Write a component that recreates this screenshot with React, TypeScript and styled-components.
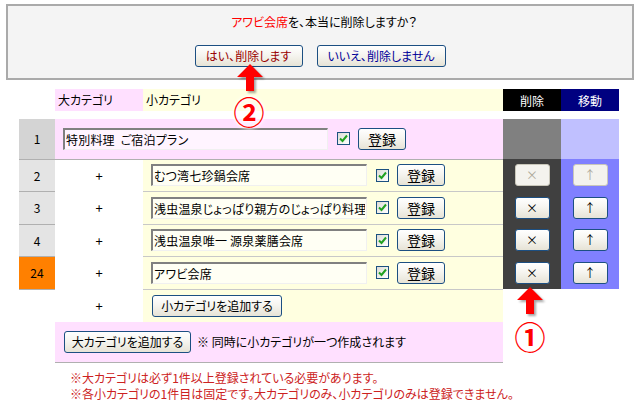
import styled, { createGlobalStyle } from 'styled-components';

const GlobalStyle = createGlobalStyle`
  body {
    margin: 0;
    background: #ffffff;
    color: #000000;
    font-family: "Noto Sans CJK JP", "Noto Sans", sans-serif;
    font-size: 12px;
    font-feature-settings: "palt";
  }
`;

type SubItem = { no: number; name: string; current?: boolean; locked?: boolean };

const subItems: SubItem[] = [
  { no: 2, name: 'むつ湾七珍鍋会席', locked: true },
  { no: 3, name: '浅虫温泉じょっぱり親方のじょっぱり料理' },
  { no: 4, name: '浅虫温泉唯一 源泉薬膳会席' },
  { no: 24, name: 'アワビ会席', current: true },
];

const CheckBox = () => (
  <CheckFrame>
    <svg width="9" height="9" viewBox="0 0 9 9">
      <path d="M1 4.5 L3.5 7 L8 1.5" fill="none" stroke="#21a121" strokeWidth="2" />
    </svg>
  </CheckFrame>
);

const UpArrow = ({ left, top }: { left: number; top: number }) => (
  <ArrowWrap style={{ left, top }}>
    <svg width="28" height="30" viewBox="0 0 28 30">
      <path d="M14 1 L27 14 L18 14 L18 28 L10 28 L10 14 L1 14 Z" fill="#ff0000" />
    </svg>
  </ArrowWrap>
);

const App = () => {
  return (
    <Page>
      <GlobalStyle />
      <ConfirmBox>
        <Question>
          <Em>アワビ会席</Em>を、本当に削除しますか？
        </Question>
        <ButtonRow>
          <XpButton tone="yes" width={108}>はい、削除します</XpButton>
          <XpButton tone="no" width={129}>いいえ、削除しません</XpButton>
        </ButtonRow>
      </ConfirmBox>

      <Table>
        <colgroup>
          <col style={{ width: 36 }} />
          <col style={{ width: 88 }} />
          <col style={{ width: 360 }} />
          <col style={{ width: 58 }} />
          <col style={{ width: 58 }} />
        </colgroup>
        <tbody>
          <HeadRow>
            <td />
            <HeadCell bg="#ffe0ff">大カテゴリ</HeadCell>
            <HeadCell bg="#ffffe0">小カテゴリ</HeadCell>
            <HeadDark bg="#000000">削除</HeadDark>
            <HeadDark bg="#000080">移動</HeadDark>
          </HeadRow>
          <SpacerRow>
            <td colSpan={5} />
          </SpacerRow>
          <MainRow>
            <NumCell bg="#d4d4d4">1</NumCell>
            <PinkCell colSpan={2}>
              <FieldLine>
                <TextInput width={265} bg="#fff4ff" defaultValue="特別料理  ご宿泊プラン" />
                <CheckBox />
                <XpButton width={48} big>登録</XpButton>
              </FieldLine>
            </PinkCell>
            <ToolCell bg="#808080" />
            <ToolCell bg="#c0c0ff" />
          </MainRow>
          {subItems.map((item) => (
            <SubRow key={item.no}>
              <NumCell bg={item.current ? '#ff8000' : '#e4e4e4'}>{item.no}</NumCell>
              <PlusCell>+</PlusCell>
              <SubCell>
                <FieldLine>
                  <TextInput width={216} bg="#fffff4" defaultValue={item.name} />
                  <CheckBox />
                  <XpButton width={48} big>登録</XpButton>
                </FieldLine>
              </SubCell>
              <ToolCell bg="#404040">
                <XpButton width={35} disabled={item.locked}>×</XpButton>
              </ToolCell>
              <ToolCell bg="#8080ff">
                <XpButton width={35} disabled={item.locked}>↑</XpButton>
              </ToolCell>
            </SubRow>
          ))}
          <AddRow>
            <td />
            <PlusCell>+</PlusCell>
            <AddCell>
              <XpButton width={130}>小カテゴリを追加する</XpButton>
            </AddCell>
            <td />
            <td />
          </AddRow>
          <FootRow>
            <td />
            <FootCell colSpan={2}>
              <FieldLine>
                <XpButton width={127}>大カテゴリを追加する</XpButton>
                <FootNote>※ 同時に小カテゴリが一つ作成されます</FootNote>
              </FieldLine>
            </FootCell>
            <td />
            <td />
          </FootRow>
        </tbody>
      </Table>

      <Notes>
        <div>※大カテゴリは必ず1件以上登録されている必要があります。</div>
        <div>※各小カテゴリの1件目は固定です。大カテゴリのみ、小カテゴリのみは登録できません。</div>
      </Notes>

      <UpArrow left={236} top={63} />
      <Marker style={{ left: 249, top: 110 }}>②</Marker>
      <UpArrow left={516} top={286} />
      <Marker style={{ left: 530, top: 335 }}>①</Marker>
    </Page>
  );
};

const Page = styled.div`
  position: relative;
  width: 639px;
  height: 406px;
  padding-top: 4px;
  box-sizing: border-box;
  overflow: hidden;
`;

const ConfirmBox = styled.div`
  margin: 0 5px 0 6px;
  height: 76px;
  box-sizing: border-box;
  border: 2px solid #aaaaaa;
  background: #f4f4f4;
  display: flex;
  flex-direction: column;
  align-items: center;
  padding-top: 8px;
  gap: 15px;
`;

const Question = styled.div`
  font-size: 12px;
  line-height: 16px;
  padding-left: 8px;
`;

const Em = styled.span`
  color: #ff0000;
`;

const ButtonRow = styled.div`
  display: flex;
  gap: 14px;
`;

const XpButton = styled.button<{ width?: number; tone?: 'yes' | 'no'; big?: boolean }>`
  width: ${({ width }) => (width ? `${width}px` : 'auto')};
  height: 22px;
  padding: 0;
  box-sizing: border-box;
  border: 1px solid #1c4f82;
  border-radius: 3px;
  background: linear-gradient(#ffffff 0%, #f6f5f0 45%, #e6e3d6 100%);
  font-family: "Noto Sans CJK JP", "Noto Sans", sans-serif;
  font-feature-settings: "palt";
  font-size: ${({ big }) => (big ? '14px' : '12px')};
  line-height: 20px;
  color: ${({ tone }) => (tone === 'yes' ? '#990000' : tone === 'no' ? '#000099' : '#000000')};
  flex-shrink: 0;

  &:disabled {
    border-color: #c9c7ba;
    background: #f4f3ee;
    color: #aca899;
  }
`;

const Table = styled.table`
  margin: 9px 0 0 19px;
  border-collapse: collapse;
  border-spacing: 0;
  table-layout: fixed;
  width: 600px;

  td {
    padding: 0;
  }
`;

const HeadRow = styled.tr`
  height: 22px;
`;

const HeadCell = styled.td<{ bg: string }>`
  background: ${({ bg }) => bg};
  padding-left: 3px !important;
  line-height: 16px;
`;

const HeadDark = styled.td<{ bg: string }>`
  background: ${({ bg }) => bg};
  color: #ffffff;
  text-align: center;
`;

const SpacerRow = styled.tr`
  height: 8px;
`;

const MainRow = styled.tr`
  height: 40px;
`;

const SubRow = styled.tr`
  height: 32.5px;
`;

const AddRow = styled.tr`
  height: 33px;
`;

const FootRow = styled.tr`
  height: 40px;
`;

const NumCell = styled.td<{ bg: string }>`
  background: ${({ bg }) => bg};
  text-align: center;
  border-bottom: 1px solid #b0b0b0;
`;

const PinkCell = styled.td`
  background: #ffe0ff;
  padding-left: 8px !important;
  border-bottom: 1px solid #b0b0b0;
`;

const PlusCell = styled.td`
  text-align: center;
  font-size: 13px;
`;

const SubCell = styled.td`
  background: #ffffe0;
  padding-left: 8px !important;
  border-bottom: 1px solid #c8c8c8;
`;

const AddCell = styled.td`
  background: #ffffe0;
  padding-left: 9px !important;
`;

const FootCell = styled.td`
  background: #ffe0ff;
  padding-left: 9px !important;
  border-bottom: 1px solid #b0b0b0;
`;

const ToolCell = styled.td<{ bg: string }>`
  background: ${({ bg }) => bg};
  text-align: center;
`;

const FieldLine = styled.div`
  display: flex;
  align-items: center;
  gap: 8px;
`;

const TextInput = styled.input<{ width: number; bg: string }>`
  width: ${({ width }) => width}px;
  height: 22px;
  box-sizing: border-box;
  padding: 0 1px;
  border-style: solid;
  border-width: 2px 1px 1px 2px;
  border-color: #808080 #f0f0f0 #f0f0f0 #808080;
  background: ${({ bg }) => bg};
  font-family: "Noto Sans CJK JP", "Noto Sans", sans-serif;
  font-feature-settings: "palt";
  font-size: 12px;
  letter-spacing: 0.2px;
  color: #000000;
  outline: none;
`;

const CheckFrame = styled.span`
  display: inline-flex;
  align-items: center;
  justify-content: center;
  width: 13px;
  height: 13px;
  box-sizing: border-box;
  border: 1px solid #1c5180;
  background: linear-gradient(135deg, #dcdcd7, #ffffff);
  margin-left: 1px;
`;

const FootNote = styled.span`
  margin-left: -2px;
`;

const Notes = styled.div`
  margin: 7px 0 0 70px;
  color: #cc2222;
  line-height: 16px;
`;

const ArrowWrap = styled.div`
  position: absolute;
  width: 28px;
  height: 30px;
  filter: drop-shadow(2px 2px 1px rgba(0, 0, 0, 0.35));
`;

const Marker = styled.span`
  position: absolute;
  transform: translate(-50%, -50%);
  font-size: 31px;
  line-height: 1;
  font-weight: bold;
  color: #ff0000;
  text-shadow: 0 0 2px #fff, 0 0 3px #fff, 0 0 4px #fff, 0 0 5px #fff;
`;

export default App;
